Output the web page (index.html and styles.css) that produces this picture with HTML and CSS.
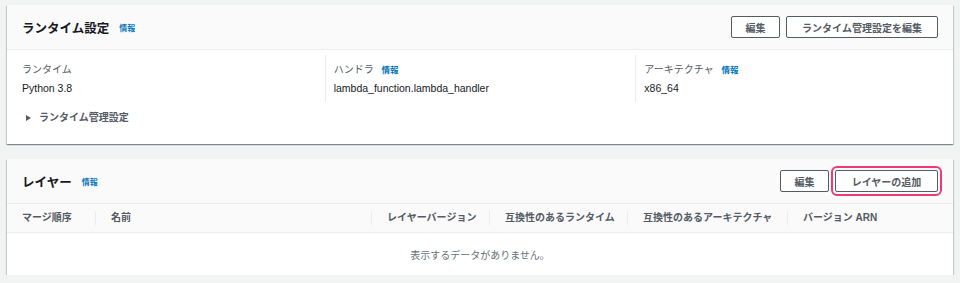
FILE: index.html
```html
<!DOCTYPE html>
<html lang="ja">
<head>
<meta charset="utf-8">
<title>Lambda</title>
<link rel="stylesheet" href="styles.css">
</head>
<body>
<div class="page">
  <section class="card">
    <div class="card-header">
      <div class="title-wrap">
        <h2 class="title">ランタイム設定</h2>
        <a class="info">情報</a>
      </div>
      <div class="actions">
        <button class="btn btn-edit">編集</button>
        <button class="btn btn-wide">ランタイム管理設定を編集</button>
      </div>
    </div>
    <div class="card-body">
      <div class="columns">
        <div class="col">
          <div class="label">ランタイム</div>
          <div class="value">Python 3.8</div>
        </div>
        <div class="col col-sep">
          <div class="label">ハンドラ <a class="info info-sm">情報</a></div>
          <div class="value">lambda_function.lambda_handler</div>
        </div>
        <div class="col col-sep">
          <div class="label">アーキテクチャ <a class="info info-sm">情報</a></div>
          <div class="value">x86_64</div>
        </div>
      </div>
      <div class="expander"><span class="caret"></span>ランタイム管理設定</div>
    </div>
  </section>

  <section class="card">
    <div class="card-header">
      <div class="title-wrap">
        <h2 class="title">レイヤー</h2>
        <a class="info">情報</a>
      </div>
      <div class="actions">
        <button class="btn btn-edit">編集</button>
        <button class="btn btn-add">レイヤーの追加</button>
      </div>
    </div>
    <div class="table-head">
      <div class="th th-first">マージ順序</div>
      <div class="th">名前</div>
      <div class="th">レイヤーバージョン</div>
      <div class="th">互換性のあるランタイム</div>
      <div class="th">互換性のあるアーキテクチャ</div>
      <div class="th">バージョン ARN</div>
    </div>
    <div class="empty">表示するデータがありません。</div>
  </section>
</div>
</body>
</html>
```

FILE: styles.css
```css
html, body {
  margin: 0;
  padding: 0;
  background: #f2f3f3;
}
body {
  font-family: "Liberation Sans", "Noto Sans CJK JP", sans-serif;
  font-size: 10px;
  color: #16191f;
}
.page {
  padding: 5px 7px 0 7px;
  display: flex;
  flex-direction: column;
  gap: 15px;
}
.card {
  background: #fff;
  box-shadow: 0 1px 1px 0 rgba(0, 28, 36, 0.3), 1px 1px 1px 0 rgba(0, 28, 36, 0.15), -1px 1px 1px 0 rgba(0, 28, 36, 0.15);
}
.card-header {
  height: 45px;
  box-sizing: border-box;
  background: #fafafa;
  border-bottom: 1px solid #eaeded;
  display: flex;
  align-items: center;
  justify-content: space-between;
  padding: 0 15px 0 15px;
}
.title-wrap {
  display: flex;
  align-items: center;
  gap: 10px;
}
.title {
  margin: 0;
  font-size: 12.5px;
  font-weight: bold;
  color: #16191f;
}
.info {
  color: #0073bb;
  font-size: 8px;
  font-weight: bold;
  margin-top: 1px;
}
.info-sm {
  margin-left: 5px;
  font-size: 8.5px;
}
.actions {
  display: flex;
  gap: 6px;
}
.btn {
  height: 22px;
  box-sizing: border-box;
  background: #fff;
  border: 1px solid #545b64;
  border-radius: 2px;
  font-family: inherit;
  font-size: 10px;
  font-weight: bold;
  color: #545b64;
  padding: 0;
}
.btn-edit {
  width: 49px;
}
.btn-wide {
  width: 152px;
}
.btn-add {
  width: 103px;
  outline: 2px solid #ee3a74;
  outline-offset: 2px;
}
.card-body {
  padding: 5px 7px 0 7px;
  height: 94px;
  box-sizing: border-box;
}
.columns {
  display: grid;
  grid-template-columns: repeat(3, 1fr);
  height: 47px;
}
.col {
  padding: 8px 8px 0 8px;
}
.col-sep {
  border-left: 1px solid #eaeded;
}
.label {
  color: #545b64;
  font-size: 10px;
  line-height: 14px;
}
.value {
  margin-top: 4px;
  font-size: 10.5px;
  line-height: 14px;
  color: #16191f;
}
.expander {
  margin-top: 9px;
  padding-left: 12px;
  display: flex;
  align-items: center;
  font-size: 10px;
  font-weight: bold;
  color: #545b64;
  line-height: 14px;
}
.caret {
  width: 0;
  height: 0;
  border-top: 3.5px solid transparent;
  border-bottom: 3.5px solid transparent;
  border-left: 5px solid #545b64;
  margin-right: 8px;
}
.table-head {
  display: grid;
  grid-template-columns: 88px 276px 118px 138px 160px 1fr;
  align-items: center;
  height: 29px;
  box-sizing: border-box;
  background: #fafafa;
  border-bottom: 1px solid #eaeded;
}
.th {
  font-size: 10px;
  font-weight: bold;
  color: #545b64;
  line-height: 14px;
  border-left: 1px solid #eaeded;
  padding-left: 15px;
  white-space: nowrap;
}
.th-first {
  border-left: none;
}
.empty {
  height: 42px;
  display: flex;
  align-items: center;
  justify-content: center;
  color: #687078;
  font-size: 10px;
}
```
